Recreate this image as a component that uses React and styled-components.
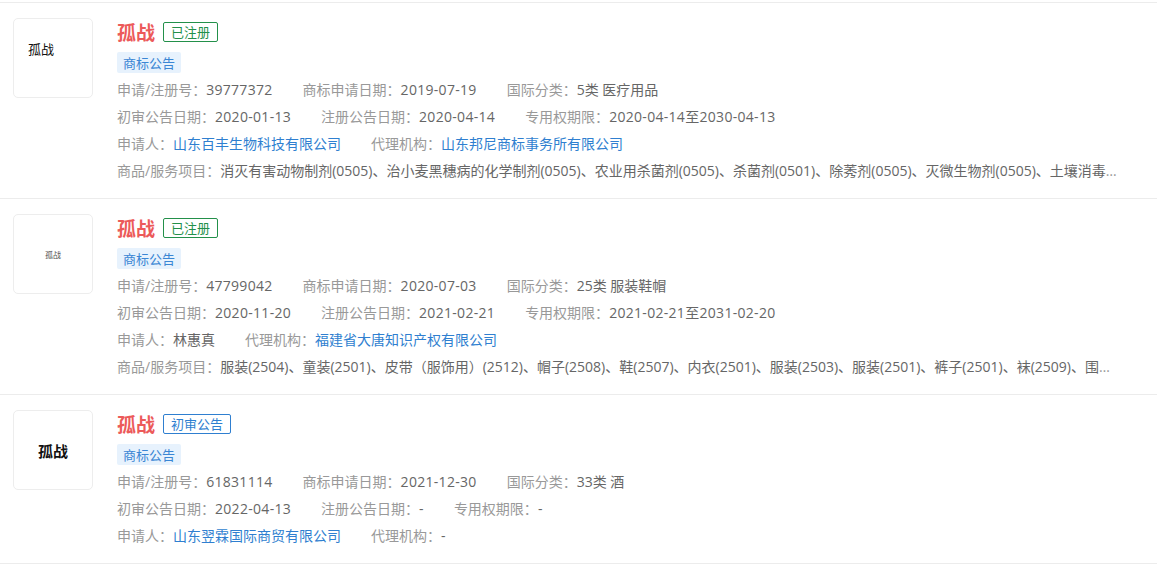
import React from 'react'
import styled, { createGlobalStyle, css } from 'styled-components'

const GlobalStyle = createGlobalStyle`
  body {
    margin: 0;
    background: #fff;
    font-family: "Open Sans", "Noto Sans CJK SC", sans-serif;
  }
`

const List = styled.div`
  margin-top: 2px;
  border-top: 1px solid #ececec;
`

const Item = styled.div`
  display: flex;
  gap: 24px;
  padding: 15px 40px 14px 13px;
  border-bottom: 1px solid #ececec;
`

const logoVariants = {
  plain: css`
    align-items: flex-start;
    justify-content: flex-start;
    padding: 21px 0 0 14px;
    font-size: 13px;
    line-height: 18px;
    color: #111;
  `,
  tiny: css`
    align-items: center;
    justify-content: center;
    font-family: "Liberation Serif", "Noto Sans CJK SC", serif;
    font-size: 8px;
    color: #555;
  `,
  bold: css`
    align-items: center;
    justify-content: center;
    font-size: 15px;
    font-weight: 700;
    color: #111;
  `,
}

const LogoBox = styled.div`
  flex: 0 0 auto;
  box-sizing: border-box;
  width: 80px;
  height: 80px;
  border: 1px solid #ededed;
  border-radius: 5px;
  display: flex;
  font-family: "Noto Sans CJK SC", sans-serif;
  ${(p) => logoVariants[p.variant]}
`

const Content = styled.div`
  flex: 1;
  min-width: 0;
  padding-top: 3px;
`

const TitleRow = styled.div`
  display: flex;
  align-items: center;
  gap: 8px;
  height: 22px;
`

const Title = styled.span`
  font-family: "Noto Sans CJK SC", sans-serif;
  font-size: 19px;
  font-weight: 700;
  color: #ec5a5a;
  line-height: 22px;
`

const statusColors = {
  green: '#23904a',
  blue: '#2f7fd0',
}

const Status = styled.span`
  box-sizing: border-box;
  height: 20px;
  padding: 0 7px;
  border: 1px solid ${(p) => statusColors[p.color]};
  border-radius: 2px;
  color: ${(p) => statusColors[p.color]};
  font-family: "Noto Sans CJK SC", sans-serif;
  font-size: 13px;
  line-height: 18px;
`

const BadgeRow = styled.div`
  display: flex;
  margin: 9px 0 3px;
`

const Badge = styled.span`
  height: 21px;
  padding: 0 6px;
  background: #e7f2fd;
  border-radius: 2px;
  color: #3a86d4;
  font-family: "Noto Sans CJK SC", sans-serif;
  font-size: 13px;
  line-height: 21px;
`

const InfoRow = styled.div`
  height: 27px;
  line-height: 27px;
  font-size: 14px;
  color: #999;
  white-space: nowrap;
  overflow: hidden;
  text-overflow: ellipsis;
`

const Field = styled.span`
  margin-right: 30px;
  &:last-child {
    margin-right: 0;
  }
`

const Value = styled.span`
  color: ${(p) => (p.link ? '#2f7fd0' : '#666')};
  letter-spacing: ${(p) => (p.num ? '0.3px' : '0')};
`

const items = [
  {
    logo: 'plain',
    status: { text: '已注册', color: 'green' },
    no: '39777372',
    applyDate: '2019-07-19',
    cls: '5类 医疗用品',
    firstDate: '2020-01-13',
    regDate: '2020-04-14',
    term: '2020-04-14至2030-04-13',
    applicant: { text: '山东百丰生物科技有限公司', link: true },
    agent: { text: '山东邦尼商标事务所有限公司', link: true },
    goods:
      '消灭有害动物制剂(0505)、治小麦黑穗病的化学制剂(0505)、农业用杀菌剂(0505)、杀菌剂(0501)、除莠剂(0505)、灭微生物剂(0505)、土壤消毒剂(0505)、杀虫剂(0505)',
  },
  {
    logo: 'tiny',
    status: { text: '已注册', color: 'green' },
    no: '47799042',
    applyDate: '2020-07-03',
    cls: '25类 服装鞋帽',
    firstDate: '2020-11-20',
    regDate: '2021-02-21',
    term: '2021-02-21至2031-02-20',
    applicant: { text: '林惠真', link: false },
    agent: { text: '福建省大唐知识产权有限公司', link: true },
    goods:
      '服装(2504)、童装(2501)、皮带（服饰用）(2512)、帽子(2508)、鞋(2507)、内衣(2501)、服装(2503)、服装(2501)、裤子(2501)、袜(2509)、围巾(2511)、手套(2510)',
  },
  {
    logo: 'bold',
    status: { text: '初审公告', color: 'blue' },
    no: '61831114',
    applyDate: '2021-12-30',
    cls: '33类 酒',
    firstDate: '2022-04-13',
    regDate: '-',
    term: '-',
    applicant: { text: '山东翌霖国际商贸有限公司', link: true },
    agent: { text: '-', link: false },
    goods: null,
  },
]

const TrademarkItem = ({ data }) => (
  <Item>
    <LogoBox variant={data.logo}>孤战</LogoBox>
    <Content>
      <TitleRow>
        <Title>孤战</Title>
        <Status color={data.status.color}>{data.status.text}</Status>
      </TitleRow>
      <BadgeRow>
        <Badge>商标公告</Badge>
      </BadgeRow>
      <InfoRow>
        <Field>申请/注册号：<Value num>{data.no}</Value></Field>
        <Field>商标申请日期：<Value num>{data.applyDate}</Value></Field>
        <Field>国际分类：<Value>{data.cls}</Value></Field>
      </InfoRow>
      <InfoRow>
        <Field>初审公告日期：<Value num>{data.firstDate}</Value></Field>
        <Field>注册公告日期：<Value num>{data.regDate}</Value></Field>
        <Field>专用权期限：<Value num>{data.term}</Value></Field>
      </InfoRow>
      <InfoRow>
        <Field>申请人：<Value link={data.applicant.link}>{data.applicant.text}</Value></Field>
        <Field>代理机构：<Value link={data.agent.link}>{data.agent.text}</Value></Field>
      </InfoRow>
      {data.goods && (
        <InfoRow>
          商品/服务项目：<Value>{data.goods}</Value>
        </InfoRow>
      )}
    </Content>
  </Item>
)

const App = () => (
  <>
    <GlobalStyle />
    <List>
      {items.map((it) => (
        <TrademarkItem key={it.no} data={it} />
      ))}
    </List>
  </>
)

export default App
